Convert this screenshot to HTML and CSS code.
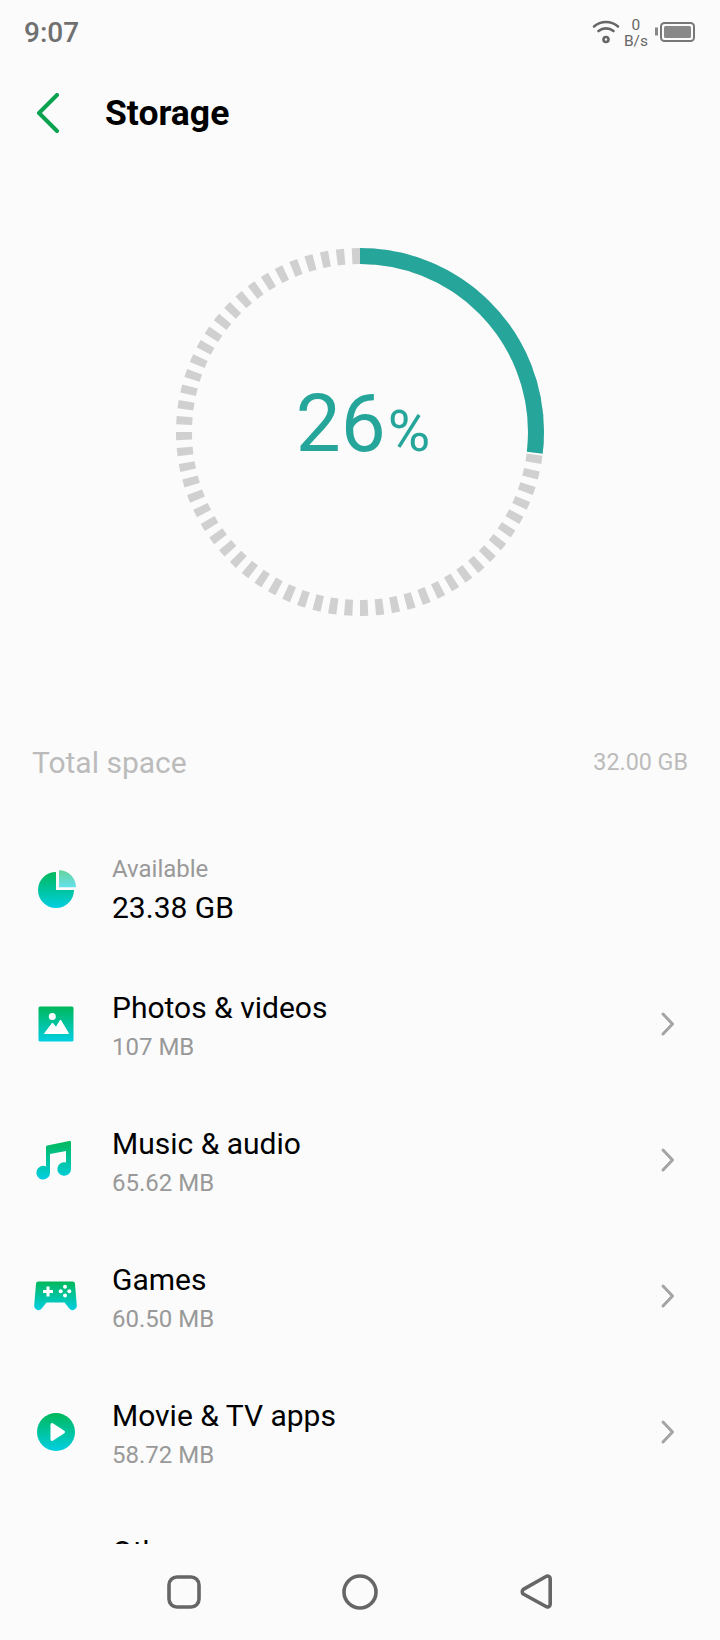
FILE: index.html
```html
<!DOCTYPE html>
<html lang="en">
<head>
	<meta charset="utf-8">
	<title>Storage</title>
	<link rel="stylesheet" href="styles.css">
</head>
<body>
	<svg class="defs" width="0" height="0">
		<defs>
			<linearGradient id="grad" x1="0" y1="0" x2="0" y2="1">
				<stop offset="0" stop-color="#00b85a"/>
				<stop offset="1" stop-color="#00cfe2"/>
			</linearGradient>
		</defs>
	</svg>

	<header class="status">
		<span class="time">9:07</span>
		<div class="status-icons">
			<svg class="wifi" width="28" height="26" viewBox="0 0 28 26" fill="none" stroke="#666" stroke-width="2.600" stroke-linecap="round">
				<path d="M2 7.500C9 1.500 19 1.500 26 7.500"/>
				<path d="M6.500 12C11 8.500 17 8.500 21.500 12"/>
				<circle cx="14" cy="20.500" r="2.500"/>
			</svg>
			<div class="speed"><span>0</span><span>B/s</span></div>
			<svg class="battery" width="40" height="20" viewBox="0 0 40 20">
				<rect x="0" y="5.500" width="3" height="8" fill="#888"/>
				<rect x="6" y="1" width="33" height="18" rx="3.500" fill="none" stroke="#777" stroke-width="2"/>
				<rect x="9" y="4" width="27" height="12" rx="1.500" fill="#888"/>
			</svg>
		</div>
	</header>

	<div class="appbar">
		<svg class="back" width="24" height="40" viewBox="0 0 24 40" fill="none" stroke="#0aa14f" stroke-width="4" stroke-linecap="round" stroke-linejoin="round">
			<path d="M21 2 L3 20 L21 38"/>
		</svg>
		<h1>Storage</h1>
	</div>

	<main class="content">
		<div class="gauge">
			<svg width="368" height="368" viewBox="0 0 368 368">
				<g transform="rotate(-90 184 184)" fill="none" stroke-width="16">
					<circle class="ticks" cx="184" cy="184" r="176" pathLength="360"/>
					<circle class="used" cx="184" cy="184" r="176" pathLength="360"/>
				</g>
			</svg>
			<div class="percent"><span class="num">26</span><span class="sign">%</span></div>
		</div>

		<div class="total">
			<span class="total-label">Total space</span>
			<span class="total-value">32.00 GB</span>
		</div>

		<ul class="list">
			<li class="row row-first">
				<svg class="icon" width="44" height="44" viewBox="0 0 44 44">
					<path d="M22 7A18 18 0 1 0 40 25H22Z" fill="url(#grad)"/>
					<path d="M25 5.200A17 17 0 0 1 42 22.200H25Z" fill="url(#grad)" opacity=".6"/>
				</svg>
				<div class="text">
					<div class="sub">Available</div>
					<div class="title">23.38 GB</div>
				</div>
			</li>
			<li class="row">
				<svg class="icon" width="44" height="44" viewBox="0 0 44 44">
					<rect x="4.500" y="4.500" width="35" height="35" rx="1.500" fill="url(#grad)"/>
					<circle cx="18.300" cy="14.500" r="3.500" fill="#fff"/>
					<path d="M10.500 31.500L18.500 21L22 25.500L26.500 18L34.500 31.500Z" fill="#fff" stroke="#fff" stroke-linejoin="round"/>
				</svg>
				<div class="text">
					<div class="title">Photos &amp; videos</div>
					<div class="sub">107 MB</div>
				</div>
				<svg class="chev" width="16" height="26" viewBox="0 0 16 26" fill="none" stroke="#a4a4a4" stroke-width="3" stroke-linecap="round" stroke-linejoin="round"><path d="M3 3L12.500 13L3 23"/></svg>
			</li>
			<li class="row">
				<svg class="icon" width="44" height="44" viewBox="0 0 44 44">
					<path d="M12 9a1.500 1.500 0 0 1 1.200-1.500L35.200 2.900A1.500 1.500 0 0 1 37 4.400V31a6.800 6.800 0 1 1-5-6.500V13L16 16V34.700a6.800 6.800 0 1 1-4-6.200Z" fill="url(#grad)"/>
				</svg>
				<div class="text">
					<div class="title">Music &amp; audio</div>
					<div class="sub">65.62 MB</div>
				</div>
				<svg class="chev" width="16" height="26" viewBox="0 0 16 26" fill="none" stroke="#a4a4a4" stroke-width="3" stroke-linecap="round" stroke-linejoin="round"><path d="M3 3L12.500 13L3 23"/></svg>
			</li>
			<li class="row">
				<svg class="icon" width="44" height="44" viewBox="0 0 44 44">
					<path d="M4.500 7.500H38.500a2.500 2.500 0 0 1 2.500 2.500L42.800 31.500a4.200 4.200 0 0 1-7.500 3L30.500 28.500H12.500L7.700 34.500a4.200 4.200 0 0 1-7.500-3L2 10a2.500 2.500 0 0 1 2.500-2.500Z" fill="url(#grad)"/>
					<path d="M12.500 12.500v3.500H9v3h3.500v3.500h3V19H19v-3h-3.500v-3.500Z" fill="#fff"/>
					<g fill="#fff">
						<circle cx="31" cy="12.800" r="2"/>
						<circle cx="31" cy="21.500" r="2"/>
						<circle cx="26.700" cy="17.200" r="2"/>
						<circle cx="35.300" cy="17.200" r="2"/>
					</g>
				</svg>
				<div class="text">
					<div class="title">Games</div>
					<div class="sub">60.50 MB</div>
				</div>
				<svg class="chev" width="16" height="26" viewBox="0 0 16 26" fill="none" stroke="#a4a4a4" stroke-width="3" stroke-linecap="round" stroke-linejoin="round"><path d="M3 3L12.500 13L3 23"/></svg>
			</li>
			<li class="row">
				<svg class="icon" width="44" height="44" viewBox="0 0 44 44">
					<circle cx="22" cy="22" r="19" fill="url(#grad)"/>
					<path d="M18 14.500L29.500 22L18 29.500Z" fill="#fff" stroke="#fff" stroke-width="3" stroke-linejoin="round"/>
				</svg>
				<div class="text">
					<div class="title">Movie &amp; TV apps</div>
					<div class="sub">58.72 MB</div>
				</div>
				<svg class="chev" width="16" height="26" viewBox="0 0 16 26" fill="none" stroke="#a4a4a4" stroke-width="3" stroke-linecap="round" stroke-linejoin="round"><path d="M3 3L12.500 13L3 23"/></svg>
			</li>
			<li class="row row-last">
				<div class="icon-blank"></div>
				<div class="text">
					<div class="title">Others</div>
				</div>
			</li>
		</ul>
	</main>

	<nav class="navbar">
		<svg width="36" height="38" viewBox="0 0 36 38" fill="none" stroke="#666" stroke-width="3.600" stroke-linejoin="round">
			<rect x="3" y="4" width="30" height="30" rx="8"/>
		</svg>
		<svg width="38" height="38" viewBox="0 0 38 38" fill="none" stroke="#666" stroke-width="3.600">
			<circle cx="19" cy="19" r="16"/>
		</svg>
		<svg width="36" height="38" viewBox="0 0 36 38" fill="none" stroke="#666" stroke-width="3.600" stroke-linejoin="round">
			<path d="M28 3.500a2.700 2.700 0 0 1 4.200 2.200V31.300a2.700 2.700 0 0 1-4.200 2.200L5.300 21a3 3 0 0 1 0-4.600Z"/>
		</svg>
	</nav>
</body>
</html>
```

FILE: styles.css
```css
* {
	box-sizing: border-box;
}
body {
	margin: 0;
	width: 720px;
	height: 1640px;
	overflow: hidden;
	display: flex;
	flex-direction: column;
	background: #fbfbfb;
	font-family: Roboto, "Liberation Sans", sans-serif;
	color: #000;
}
.defs {
	display: block;
	height: 0;
}

/* status bar */
.status {
	height: 64px;
	padding: 0 25px 0 24px;
	display: flex;
	align-items: center;
	justify-content: space-between;
	flex: none;
}
.time {
	font-size: 28px;
	font-weight: 500;
	color: #707070;
}
.status-icons {
	display: flex;
	align-items: center;
	color: #666;
}
.wifi {
	margin-right: 4px;
}
.speed {
	display: flex;
	flex-direction: column;
	align-items: center;
	font-size: 15.500px;
	line-height: 16.500px;
	margin-right: 7px;
	margin-top: 2px;
}

/* title row */
.appbar {
	height: 98px;
	padding-left: 36px;
	display: flex;
	align-items: center;
	flex: none;
}
.appbar h1 {
	margin: 0 0 0 45px;
	font-size: 35.500px;
	font-weight: 700;
}

.content {
	flex: 1;
	overflow: hidden;
}

/* ring */
.gauge {
	display: grid;
	place-items: center;
	margin: 86px auto 0;
	width: 368px;
	height: 368px;
}
.gauge svg,
.percent {
	grid-area: 1 / 1;
}
.gauge svg {
	display: block;
}
.ticks {
	stroke: #d0d0d0;
	stroke-dasharray: 2.6 2.4;
	stroke-dashoffset: 2.6;
}
.used {
	stroke: #26a69a;
	stroke-dasharray: 96.8 360;
}
.percent {
	color: #26a69a;
	font-weight: 400;
	display: flex;
	align-items: baseline;
	margin-top: -16px;
	margin-left: 6px;
}
.num {
	font-size: 80px;
}
.sign {
	font-size: 58px;
	margin-left: 2px;
}

/* total row */
.total {
	margin-top: 116px;
	padding: 0 32px;
	height: 60px;
	display: flex;
	align-items: center;
	justify-content: space-between;
}
.total-label {
	font-size: 30px;
	color: #bbb;
}
.total-value {
	font-size: 23.300px;
	color: #bbb;
}

/* list */
.list {
	list-style: none;
	margin: 28px 0 0;
	padding: 0;
}
.row {
	height: 136px;
	padding: 0 44.500px 0 34px;
	display: flex;
	align-items: center;
}
.row-first {
	height: 138px;
}
.icon,
.icon-blank {
	width: 44px;
	height: 44px;
	flex: none;
	margin-bottom: 5px;
}
.text {
	margin-left: 34px;
	flex: 1;
	display: flex;
	flex-direction: column;
	gap: 5px;
}
.row-last .text {
	padding-bottom: 37px;
}
.title {
	font-size: 30px;
	line-height: 36px;
}
.sub {
	font-size: 24px;
	line-height: 32px;
	color: #999;
}
.chev {
	flex: none;
	margin-bottom: 5px;
}

/* bottom nav */
.navbar {
	height: 96px;
	flex: none;
	background: #fbfbfb;
	display: flex;
	align-items: center;
	justify-content: center;
	gap: 139px;
}
```
